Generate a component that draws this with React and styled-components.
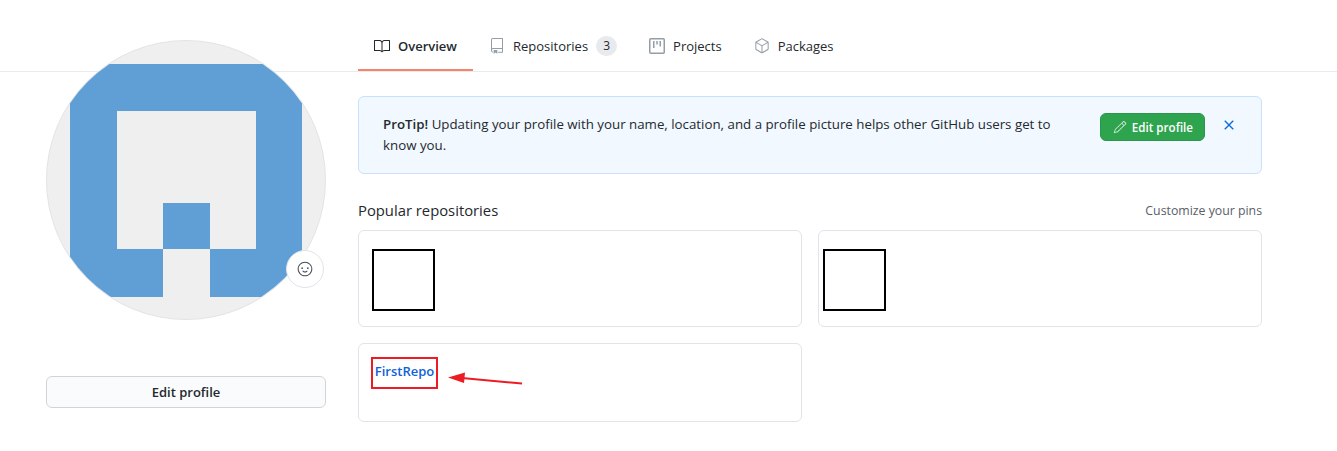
import styled, { createGlobalStyle } from "styled-components";
import { GoBook, GoRepo, GoPackage, GoSmiley, GoPencil, GoX } from "react-icons/go";

const ProjectIcon = () => (
  <svg width="16" height="16" viewBox="0 0 16 16" fill="none" stroke="#959da5">
    <rect x="0.75" y="0.75" width="14.5" height="14.5" rx="1" strokeWidth="1.5" />
    <path d="M4.75 3V10M8 3V6.5M11.25 3V8.5" strokeWidth="1.5" />
  </svg>
);

const tabs = [
  { label: "Overview", icon: GoBook, active: true },
  { label: "Repositories", icon: GoRepo, count: 3 },
  { label: "Projects", icon: ProjectIcon },
  { label: "Packages", icon: GoPackage },
];

const App = () => {
  return (
    <>
      <GlobalStyle />
      <TabBar>
        {tabs.map(({ label, icon: Icon, active, count }) => (
          <Tab key={label} $active={active}>
            <Icon size={16} color={active ? "#24292e" : "#959da5"} />
            <TabLabel>{label}</TabLabel>
            {count && <Counter>{count}</Counter>}
          </Tab>
        ))}
      </TabBar>
      <Layout>
        <Sidebar>
          <Avatar>
            <svg width="278" height="278" viewBox="1 1 278 278">
              <path
                fill="#609ed6"
                fillRule="evenodd"
                d="M24 24H256V257H164V209H210V71H71V209H117V257H24ZM117 163H164V209H117Z"
              />
            </svg>
            <EmojiButton>
              <GoSmiley size={16} color="#444d56" />
            </EmojiButton>
          </Avatar>
          <ProfileButton>Edit profile</ProfileButton>
        </Sidebar>
        <Main>
          <Banner>
            <BannerText>
              <strong>ProTip!</strong> Updating your profile with your name, location, and a
              profile picture helps other GitHub users get to know you.
            </BannerText>
            <GreenButton>
              <GoPencil size={14} color="#cfe8d6" />
              Edit profile
            </GreenButton>
            <CloseIcon>
              <GoX size={16} stroke="currentColor" strokeWidth={0.6} />
            </CloseIcon>
          </Banner>
          <SectionHead>
            <SectionTitle>Popular repositories</SectionTitle>
            <PinsLink>Customize your pins</PinsLink>
          </SectionHead>
          <Cards>
            <Card $height={97} $left={13}>
              <BlackSquare />
            </Card>
            <Card $height={97} $left={4}>
              <BlackSquare />
            </Card>
            <Card $height={79} $left={12}>
              <RepoBox>
                <RepoLink>FirstRepo</RepoLink>
              </RepoBox>
              <Arrow width="80" height="16" viewBox="0 0 80 16">
                <path d="M0 5.5L17 0.5L16 11Z" fill="#ed1c24" />
                <path d="M14 6L74 11.5" stroke="#ed1c24" strokeWidth="2" fill="none" />
              </Arrow>
            </Card>
          </Cards>
        </Main>
      </Layout>
    </>
  );
};

export default App;

const GlobalStyle = createGlobalStyle`
  body {
    margin: 0;
    background: #fff;
    color: #24292e;
    font-family: "Open Sans", "Noto Sans", sans-serif;
    font-size: 14px;
  }
`;

const TabBar = styled.nav`
  display: flex;
  height: 51px;
  margin-top: 20px;
  padding-left: 358px;
  border-bottom: 1px solid #e9ebec;
`;

const Tab = styled.div`
  display: flex;
  align-items: center;
  gap: 8px;
  height: 51px;
  padding: 2px 16px 0;
  box-sizing: border-box;
  border-bottom: 2px solid ${({ $active }) => ($active ? "#f9826c" : "transparent")};
  font-weight: ${({ $active }) => ($active ? 600 : 400)};
  font-size: 13px;
`;

const TabLabel = styled.span`
  white-space: nowrap;
`;

const Counter = styled.span`
  display: flex;
  align-items: center;
  justify-content: center;
  width: 21px;
  height: 20px;
  border-radius: 10px;
  background: #e8eaed;
  font-size: 12px;
`;

const Layout = styled.div`
  display: flex;
  gap: 32px;
  padding: 0 75px 0 46px;
`;

const Sidebar = styled.aside`
  width: 280px;
  flex: none;
  margin-top: -32px;
`;

const Avatar = styled.div`
  position: relative;
  width: 280px;
  height: 280px;
  border: 1px solid #e1e4e8;
  border-radius: 50%;
  box-sizing: border-box;
  background: #efefef;

  > svg {
    display: block;
    border-radius: 50%;
  }
`;

const EmojiButton = styled.div`
  position: absolute;
  left: 239px;
  top: 209px;
  width: 38px;
  height: 38px;
  display: flex;
  align-items: center;
  justify-content: center;
  border: 1px solid #e1e4e8;
  border-radius: 50%;
  box-sizing: border-box;
  background: #fff;
`;

const ProfileButton = styled.button`
  display: block;
  width: 280px;
  height: 32px;
  margin-top: 56px;
  border: 1px solid #d1d5da;
  border-radius: 6px;
  background: #fafbfc;
  color: #24292e;
  font: 600 13px "Open Sans", sans-serif;
`;

const Main = styled.main`
  flex: 1;
  min-width: 0;
  padding-top: 24px;
`;

const Banner = styled.div`
  display: flex;
  align-items: flex-start;
  height: 78px;
  padding: 16px 24px 0;
  box-sizing: border-box;
  border: 1px solid #c8e1ff;
  border-radius: 6px;
  background: #f1f8ff;
`;

const BannerText = styled.p`
  flex: 1;
  margin: 1px 0 0;
  padding-right: 40px;
  font-size: 13.3px;
  line-height: 21px;

  strong {
    font-weight: 600;
  }
`;

const GreenButton = styled.div`
  display: flex;
  align-items: center;
  gap: 5px;
  height: 28px;
  padding: 0 11px 0 12px;
  box-sizing: border-box;
  border: 1px solid #2c974b;
  border-radius: 6px;
  background: #2ea44f;
  color: #fff;
  font-size: 11.6px;
  font-weight: 600;
  white-space: nowrap;
`;

const CloseIcon = styled.span`
  display: flex;
  margin: 4px 0 0 16px;
  color: #0366d6;
`;

const SectionHead = styled.div`
  display: flex;
  justify-content: space-between;
  align-items: flex-start;
  margin-top: 25px;
  height: 31px;
`;

const SectionTitle = styled.h2`
  margin: 0;
  font-size: 14.8px;
  font-weight: 400;
  line-height: 22px;
`;

const PinsLink = styled.span`
  font-size: 12.3px;
  line-height: 24px;
  color: #586069;
`;

const Cards = styled.div`
  display: grid;
  grid-template-columns: 1fr 1fr;
  gap: 16px;
`;

const Card = styled.div`
  position: relative;
  height: ${({ $height }) => $height}px;
  padding: 13px ${({ $left }) => $left}px;
  box-sizing: border-box;
  border: 1px solid #e1e4e8;
  border-radius: 6px;
  background: #fff;
`;

const BlackSquare = styled.div`
  width: 63px;
  height: 62px;
  margin-top: 5px;
  border: 2px solid #000;
  box-sizing: border-box;
`;

const RepoBox = styled.div`
  display: flex;
  align-items: center;
  justify-content: center;
  width: 67px;
  height: 32px;
  padding-bottom: 4px;
  box-sizing: border-box;
  border: 2px solid #ed1c24;
`;

const RepoLink = styled.span`
  color: #0f62d9;
  font-size: 13px;
  font-weight: 600;
`;

const Arrow = styled.svg`
  position: absolute;
  left: 89px;
  top: 28px;
`;
